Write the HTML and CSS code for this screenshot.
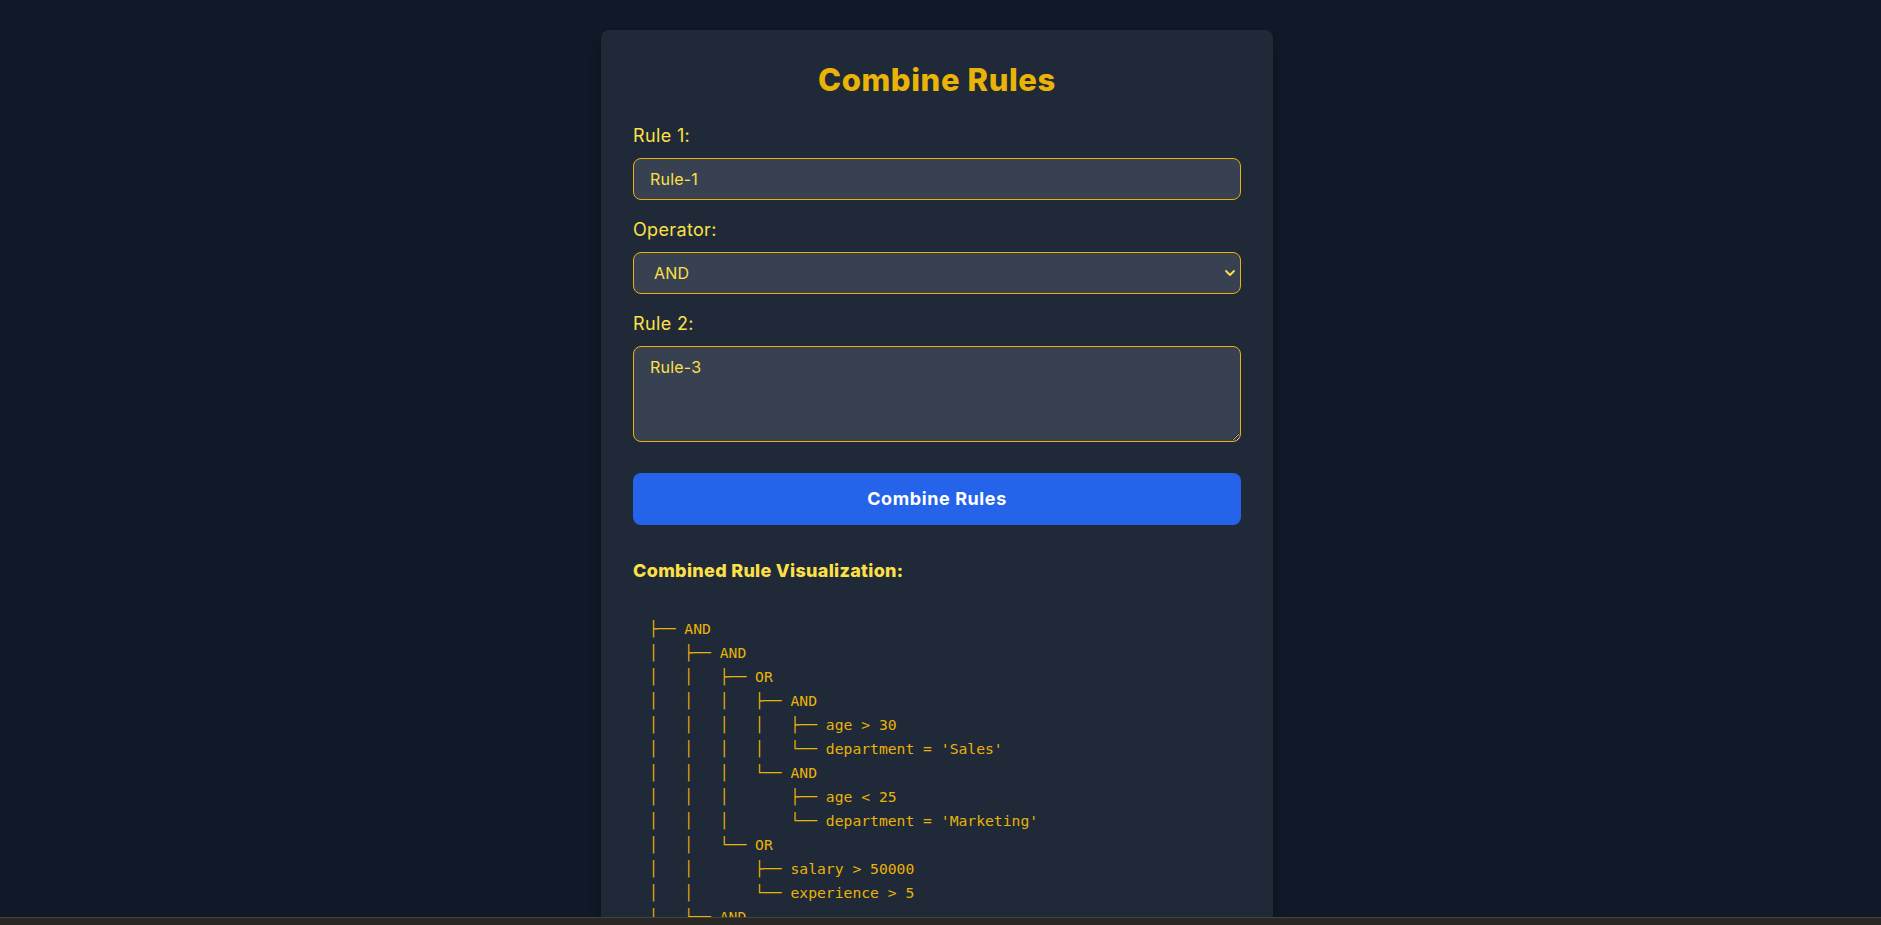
FILE: index.html
```html
<!DOCTYPE html>
<html lang="en">
<head>
<meta charset="utf-8">
<title>Combine Rules</title>
<link rel="stylesheet" href="styles.css">
</head>
<body>
<main class="page">
  <section class="card">
    <h1 class="title">Combine Rules</h1>
    <div class="field">
      <label class="label" for="rule1">Rule 1:</label>
      <input class="control" id="rule1" type="text" value="Rule-1">
    </div>
    <div class="field">
      <label class="label" for="op">Operator:</label>
      <div class="select-wrap">
        <select class="control select" id="op">
          <option>AND</option>
          <option>OR</option>
        </select>
        <svg class="chevron" width="10" height="6" viewBox="0 0 10 6" aria-hidden="true"><path d="M1 1l4 4 4-4" fill="none" stroke="currentColor" stroke-width="1.8" stroke-linecap="round" stroke-linejoin="round"/></svg>
      </div>
    </div>
    <div class="field field-last">
      <label class="label" for="rule2">Rule 2:</label>
      <textarea class="control area" id="rule2">Rule-3</textarea>
    </div>
    <button class="btn" type="button">Combine Rules</button>
    <h2 class="viz-title">Combined Rule Visualization:</h2>
    <pre class="tree">├── AND
│   ├── AND
│   │   ├── OR
│   │   │   ├── AND
│   │   │   │   ├── age &gt; 30
│   │   │   │   └── department = 'Sales'
│   │   │   └── AND
│   │   │       ├── age &lt; 25
│   │   │       └── department = 'Marketing'
│   │   └── OR
│   │       ├── salary &gt; 50000
│   │       └── experience &gt; 5
│   └── AND
│       ├── age &gt; 40
│       └── department = 'HR'
└── OR
    ├── salary &lt; 30000
    └── experience &lt; 2</pre>
  </section>
</main>
<div class="edge-bar"></div>
</body>
</html>
```
FILE: styles.css
```css
* { box-sizing: border-box; }

html, body {
  margin: 0;
  height: 100%;
  overflow: hidden;
}

body {
  background: #111827;
  font-family: Inter, "Noto Sans", sans-serif;
  color: #fde047;
}

.page {
  padding: 30px 7px 0 0;
}

.card {
  width: 672px;
  margin: 0 auto;
  padding: 32px;
  background: #1f2937;
  border-radius: 8px;
  box-shadow: 0 10px 15px -3px rgba(0,0,0,0.3), 0 4px 6px -4px rgba(0,0,0,0.3);
}

.title {
  margin: 0 0 24px;
  font-size: 31px;
  line-height: 36px;
  font-weight: 800;
  text-align: center;
  color: #eab308;
  letter-spacing: 0.6px;
}

.field {
  margin-bottom: 16px;
}

.field-last {
  margin-bottom: 31px;
}

.label {
  display: block;
  margin-bottom: 8px;
  font-size: 18px;
  line-height: 28px;
  color: #fde047;
  letter-spacing: 0.35px;
}

.control {
  display: block;
  width: 100%;
  height: 42px;
  padding: 8px 16px;
  font-family: inherit;
  font-size: 16px;
  line-height: 24px;
  color: #fde047;
  background: #374151;
  border: 1px solid #eab308;
  border-radius: 8px;
  outline: none;
  letter-spacing: 0.2px;
}

.select-wrap {
  position: relative;
}

.select {
  -webkit-appearance: none;
  appearance: none;
  padding-left: 20px;
}

.chevron {
  position: absolute;
  right: 6px;
  top: 18px;
  color: #fde047;
}

.area {
  height: 96px;
  resize: both;
}

.btn {
  display: block;
  width: 100%;
  height: 52px;
  padding: 12px 16px;
  border: 0;
  border-radius: 8px;
  background: #2563eb;
  color: #ffffff;
  font-family: inherit;
  font-size: 18px;
  line-height: 28px;
  font-weight: 700;
  letter-spacing: 0.6px;
}

.viz-title {
  margin: 32px 0 16px;
  font-size: 18px;
  line-height: 28px;
  font-weight: 800;
  color: #fde047;
  letter-spacing: 0.3px;
}

.tree {
  margin: 0;
  padding: 16px;
  font-family: "DejaVu Sans Mono", "Liberation Mono", monospace;
  font-size: 14.7px;
  line-height: 24px;
  color: #eab308;
  background: #1f2937;
}

.edge-bar {
  position: fixed;
  left: 0;
  right: 0;
  bottom: 0;
  height: 8px;
  background: #2a2826;
  border-top: 1px solid #45423d;
}
```
